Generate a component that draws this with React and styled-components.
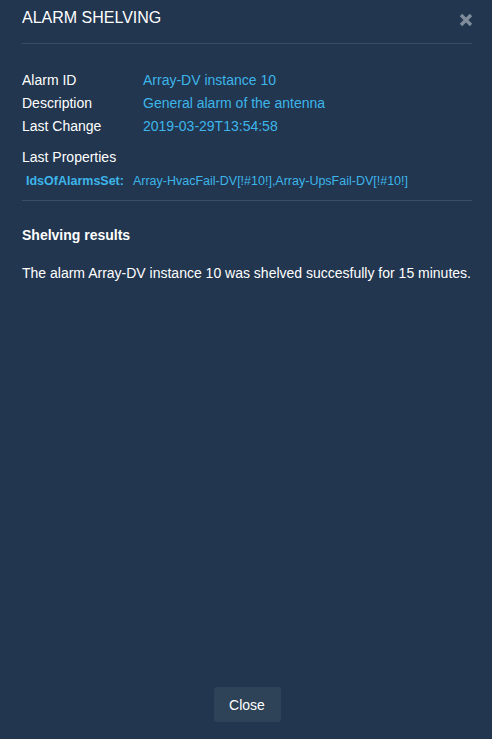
import React from 'react';
import styled, { createGlobalStyle } from 'styled-components';

const GlobalStyle = createGlobalStyle`
  html, body {
    margin: 0;
    padding: 0;
    background: #22364f;
  }
  body {
    font-family: "Liberation Sans", Arial, sans-serif;
    color: #ffffff;
  }
`;

const Dialog = styled.div`
  display: flex;
  flex-direction: column;
  box-sizing: border-box;
  width: 492px;
  height: 739px;
  padding: 0 20px 0 22px;
  background: #22364f;
`;

const Header = styled.div`
  display: flex;
  align-items: center;
  justify-content: space-between;
  height: 43px;
  border-bottom: 1px solid #3b4e66;
`;

const Title = styled.h1`
  margin: 0 0 8px;
  font-size: 16px;
  font-weight: normal;
  color: #ffffff;
`;

const CloseIcon = styled.button`
  display: flex;
  align-items: center;
  justify-content: center;
  margin: 0 -2px 4px 0;
  padding: 0;
  width: 16px;
  height: 16px;
  border: none;
  background: none;
  cursor: pointer;
`;

const Details = styled.div`
  display: grid;
  grid-template-columns: 121px 1fr;
  row-gap: 5px;
  margin-top: 27px;
  font-size: 14px;
  line-height: 18px;
`;

const Label = styled.div`
  color: #ffffff;
`;

const Value = styled.div`
  color: #3db5ea;
`;

const SectionLabel = styled.div`
  margin-top: 13px;
  font-size: 14px;
  line-height: 18px;
`;

const PropRow = styled.div`
  display: flex;
  gap: 9px;
  padding: 8px 0 11px 4px;
  font-size: 12.5px;
  line-height: 15px;
  color: #3db5ea;
  border-bottom: 1px solid #3b4e66;
`;

const PropKey = styled.span`
  font-weight: bold;
`;

const Results = styled.div`
  flex: 1;
  padding-top: 25px;
`;

const ResultsTitle = styled.div`
  font-size: 14px;
  font-weight: bold;
  line-height: 18px;
`;

const ResultsText = styled.p`
  margin: 20px 0 0;
  font-size: 14px;
  line-height: 18px;
`;

const Footer = styled.div`
  display: flex;
  justify-content: center;
  padding: 0 0 17px;
`;

const Button = styled.button`
  width: 67px;
  height: 35px;
  border: none;
  border-radius: 3px;
  background: #2e4258;
  color: #ffffff;
  font-family: "Liberation Sans", Arial, sans-serif;
  font-size: 14px;
  cursor: pointer;
`;

const XIcon = () => (
  <svg width="14" height="14" viewBox="0 0 14 14">
    <path d="M2 2 L12 12 M12 2 L2 12" stroke="#7f8c9b" strokeWidth="3.4" strokeLinecap="butt" />
  </svg>
);

const App = () => (
  <>
    <GlobalStyle />
    <Dialog>
      <Header>
        <Title>ALARM SHELVING</Title>
        <CloseIcon aria-label="close">
          <XIcon />
        </CloseIcon>
      </Header>
      <Details>
        <Label>Alarm ID</Label>
        <Value>Array-DV instance 10</Value>
        <Label>Description</Label>
        <Value>General alarm of the antenna</Value>
        <Label>Last Change</Label>
        <Value>2019-03-29T13:54:58</Value>
      </Details>
      <SectionLabel>Last Properties</SectionLabel>
      <PropRow>
        <PropKey>IdsOfAlarmsSet:</PropKey>
        <span>Array-HvacFail-DV[!#10!],Array-UpsFail-DV[!#10!]</span>
      </PropRow>
      <Results>
        <ResultsTitle>Shelving results</ResultsTitle>
        <ResultsText>
          The alarm Array-DV instance 10 was shelved succesfully for 15 minutes.
        </ResultsText>
      </Results>
      <Footer>
        <Button>Close</Button>
      </Footer>
    </Dialog>
  </>
);

export default App;
